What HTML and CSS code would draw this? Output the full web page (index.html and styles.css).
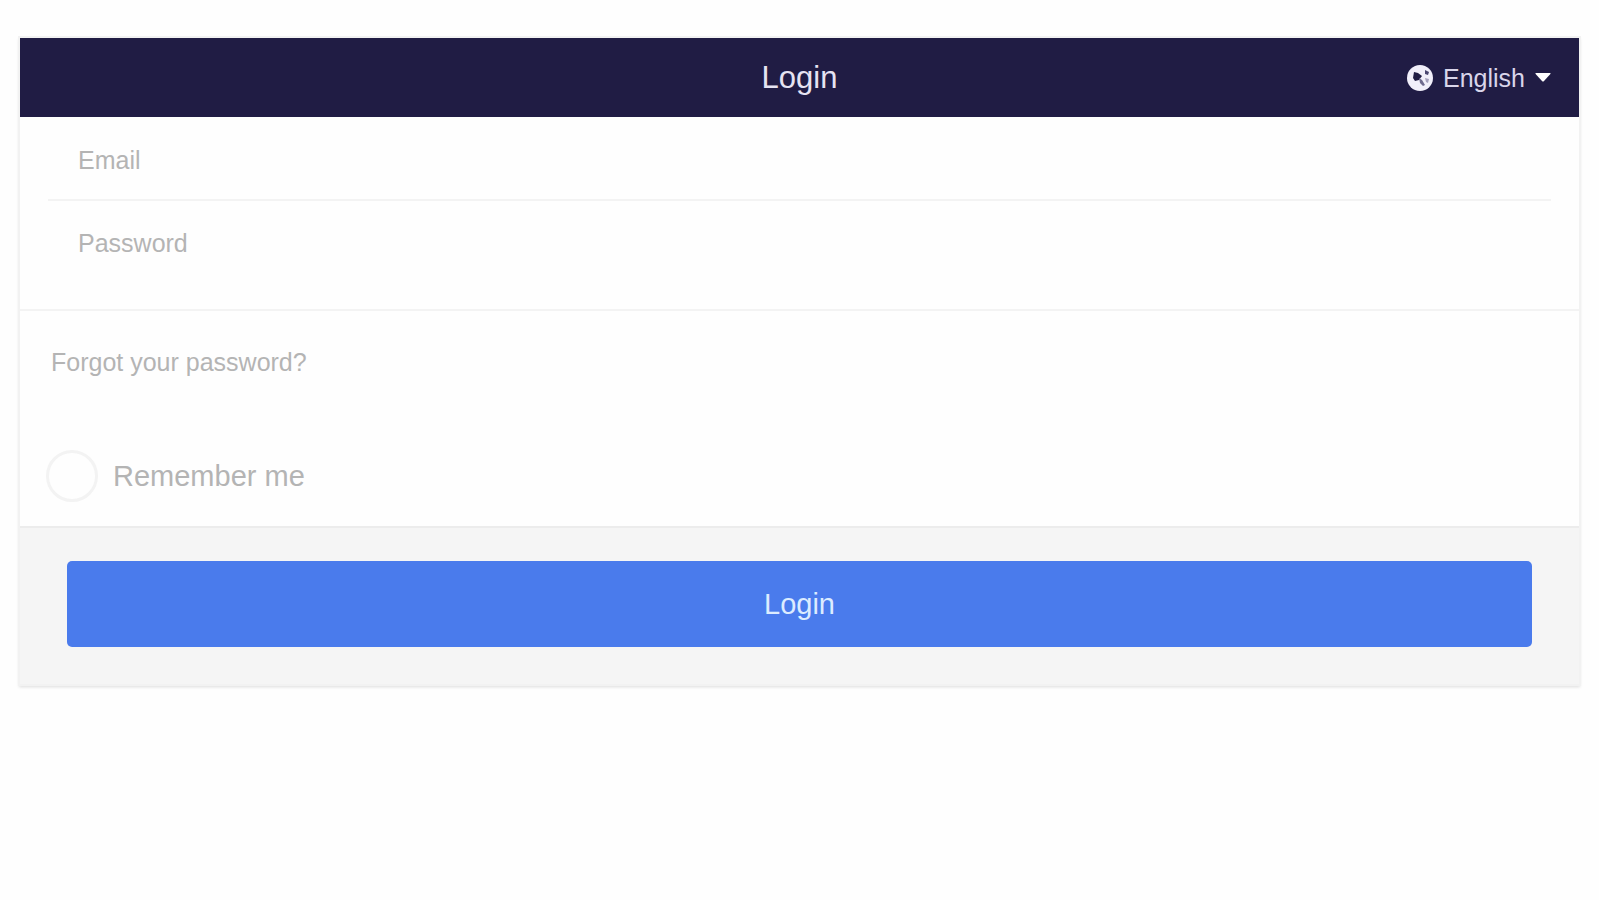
FILE: index.html
```html
<!DOCTYPE html>
<html lang="en">
<head>
  <meta charset="utf-8">
  <meta name="viewport" content="width=device-width, initial-scale=1">
  <title>Login</title>
  <link rel="stylesheet" href="styles.css">
</head>
<body>
  <form class="card">
    <header class="bar">
      <h1 class="title">Login</h1>
      <div class="language">
        <svg class="globe" viewBox="0 0 26 26" aria-hidden="true">
          <circle cx="13" cy="13" r="13" fill="#f1effa"/>
          <path d="M7 7l4 1 4 3-3 4-4 1-2-3z" fill="#201c44"/>
          <path d="M12 13l3 2 3 5-2 1-3-3z" fill="#6f6b8e"/>
          <path d="M18 5l4 2-1 3-3-1z" fill="#4a4670"/>
          <path d="M18 13l4 1-1 4-2-1z" fill="#a5a1bd"/>
        </svg>
        <select class="language-select" aria-label="Language">
          <option>English</option>
        </select>
        <svg class="caret" viewBox="0 0 16 9" aria-hidden="true">
          <path d="M1 0h14q1 0 .4 1L9 8q-1 1-2 0L.6 1Q0 0 1 0z" fill="#fff"/>
        </svg>
      </div>
    </header>
    <div class="fields">
      <input class="field" type="email" placeholder="Email" aria-label="Email">
      <input class="field" type="password" placeholder="Password" aria-label="Password">
    </div>
    <div class="options">
      <a class="forgot" href="#">Forgot your password?</a>
      <label class="remember">
        <input class="check" type="checkbox">
        <span>Remember me</span>
      </label>
    </div>
    <footer class="actions">
      <button class="submit" type="submit">Login</button>
    </footer>
  </form>
</body>
</html>
```
FILE: styles.css
```css
* {
  box-sizing: border-box;
}

body {
  margin: 0;
  padding: 38px 20px;
  background: #fefefe;
  font-family: "Liberation Sans", Arial, sans-serif;
  font-size: 25px;
  color: #b4b4b4;
}

.card {
  background: #fefefe;
  box-shadow: 0 0 0 2px #f2f2f2, 0 2px 3px 1px #dcdcdc;
}

.bar {
  display: grid;
  grid-template-columns: 1fr auto 1fr;
  align-items: center;
  height: 79px;
  padding: 0 28px;
  background: #201c44;
  color: #e6e3f2;
}

.title {
  grid-column: 2;
  margin: 0;
  font-size: 31px;
  font-weight: 400;
}

.language {
  display: flex;
  align-items: center;
  justify-content: flex-end;
}

.globe {
  width: 26px;
  height: 26px;
  margin-right: 10px;
}

.language-select {
  appearance: none;
  border: 0;
  padding: 0;
  margin-right: 10px;
  background: transparent;
  color: #d9d5ea;
  font: inherit;
}

.caret {
  width: 16px;
  height: 9px;
}

.fields {
  padding: 0 28px 28px;
  border-bottom: 2px solid #f3f3f3;
}

.field {
  display: block;
  width: 100%;
  height: 82px;
  border: 0;
  padding: 4px 30px 0;
  background: transparent;
  color: #777;
  font: inherit;
}

.field + .field {
  border-top: 2px solid #f3f3f3;
}

.field::placeholder {
  color: #b4b4b4;
  opacity: 1;
}

.options {
  display: flex;
  flex-direction: column;
  align-items: flex-start;
  gap: 74px;
  padding: 37px 26px 24px;
}

.forgot {
  margin-left: 5px;
  color: inherit;
  line-height: 28px;
  text-decoration: none;
}

.remember {
  display: flex;
  align-items: center;
  gap: 15px;
  font-size: 29px;
}

.check {
  appearance: none;
  width: 52px;
  height: 52px;
  margin: 0;
  border: 3px solid #f3f3f3;
  border-radius: 50%;
}

.check:checked {
  background: #4a7bec;
}

.actions {
  padding: 33px 47px 37px;
  border-top: 2px solid #ececec;
  background: #f5f5f5;
}

.submit {
  display: block;
  width: 100%;
  height: 86px;
  border: 0;
  border-radius: 5px;
  background: #4a7bec;
  color: #dcecff;
  font: inherit;
  font-size: 29px;
}
```
